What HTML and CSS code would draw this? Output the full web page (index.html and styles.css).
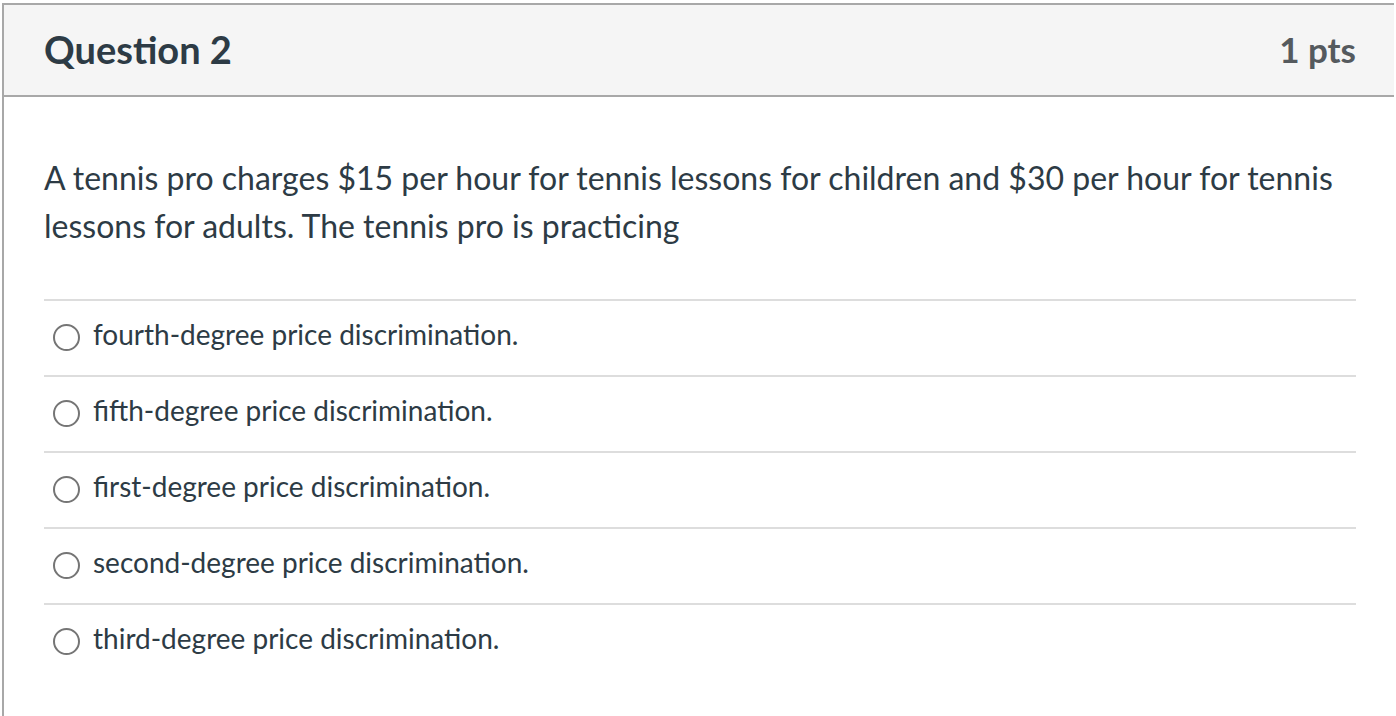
FILE: index.html
```html
<!DOCTYPE html>
<html>
<head>
<meta charset="utf-8">
<link rel="stylesheet" href="styles.css">
</head>
<body>
<div class="question">
  <div class="header">
    <h2 class="title">Question 2</h2>
    <span class="pts">1 pts</span>
  </div>
  <div class="content">
    <p class="text">A tennis pro charges $15 per hour for tennis lessons for children and $30 per hour for tennis lessons for adults. The tennis pro is practicing</p>
    <div class="answers">
      <div class="answer"><span class="radio"></span><span class="label">fourth-degree price discrimination.</span></div>
      <div class="answer"><span class="radio"></span><span class="label">fifth-degree price discrimination.</span></div>
      <div class="answer"><span class="radio"></span><span class="label">first-degree price discrimination.</span></div>
      <div class="answer"><span class="radio"></span><span class="label">second-degree price discrimination.</span></div>
      <div class="answer"><span class="radio"></span><span class="label">third-degree price discrimination.</span></div>
    </div>
  </div>
</div>
</body>
</html>
```
FILE: styles.css
```css
html, body {
  margin: 0;
  padding: 0;
  background: #fff;
  overflow: hidden;
}
body {
  font-family: Lato, "Liberation Sans", sans-serif;
  color: #2d3b45;
  padding: 3px 0 0 2px;
}
.question {
  width: 1392px;
  height: 713px;
  border-top: 2px solid #a8a8a8;
  border-left: 2px solid #a8a8a8;
  box-sizing: border-box;
  overflow: hidden;
}
.header {
  height: 92px;
  background: #f5f5f5;
  border-bottom: 2px solid #a8a8a8;
  box-sizing: border-box;
  display: flex;
  align-items: center;
  justify-content: space-between;
  padding: 0 38px 2px 40px;
}
.title {
  margin: 0;
  font-size: 38px;
  font-weight: 700;
  color: #2d3b45;
}
.pts {
  font-size: 35px;
  font-weight: 700;
  color: #555a5e;
}
.content {
  padding: 57px 38px 0 40px;
}
.text {
  margin: 0 0 49px;
  font-size: 32px;
  line-height: 48px;
}
.answers {
  display: flex;
  flex-direction: column;
}
.answer {
  height: 76px;
  border-top: 2px solid #dddddd;
  box-sizing: border-box;
  display: flex;
  align-items: center;
  padding-left: 9px;
}
.radio {
  width: 23px;
  height: 23px;
  border: 2px solid #757575;
  border-radius: 50%;
  flex: none;
  margin-right: 13px;
  margin-top: -1px;
}
.label {
  font-size: 28px;
  margin-top: -8px;
}
```
